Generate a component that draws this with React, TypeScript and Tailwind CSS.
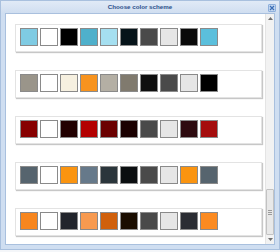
import React from 'react';

const schemes: string[][] = [
  ['#7fcbe3', '#ffffff', '#000000', '#4fb0cb', '#a5dff0', '#06141a', '#4a4a4a', '#e6e6e6', '#0a0a0a', '#5bbfdc'],
  ['#9a958a', '#ffffff', '#f6f0e0', '#f7931e', '#b4afa4', '#807a6e', '#0f0f0f', '#4a4a4a', '#e6e6e6', '#000000'],
  ['#870000', '#ffffff', '#220000', '#b30000', '#6b0000', '#1a0000', '#4a4a4a', '#e6e6e6', '#2e0b10', '#a50d0d'],
  ['#56646e', '#ffffff', '#fa9410', '#66798a', '#2b353b', '#0b0e10', '#4a4a4a', '#e6e6e6', '#fa9410', '#56646e'],
  ['#f7861e', '#ffffff', '#22252c', '#f79a50', '#d0600c', '#1a0d00', '#4a4a4a', '#e6e6e6', '#2b2d33', '#fb8a20'],
];

function SchemeCard({ colors }: { colors: string[] }) {
  return (
    <div className="h-[28px] shrink-0 border border-[#e3e3e3] bg-white pt-[3px] pl-[4px] shadow-[1px_1px_1px_rgba(0,0,0,0.22)] flex gap-[2px]">
      {colors.map((c, i) => (
        <div
          key={i}
          className="w-[18px] h-[18px] border border-[#8a8a8a]"
          style={{ backgroundColor: c }}
        />
      ))}
    </div>
  );
}

export default function App() {
  return (
    <div className="w-[280px] h-[252px] bg-[#f4f6f9]" style={{ fontFamily: '"Liberation Sans", Arial, sans-serif' }}>
      <div className="w-[280px] h-[250px] border border-[#a9c0de] bg-[#cfdef1] flex flex-col">
        <div className="h-[12px] relative bg-gradient-to-b from-[#e1eaf6] to-[#d0def0] flex items-center justify-center">
          <span className="text-[6.2px] font-bold text-[#2a4f8a] leading-none">Choose color scheme</span>
          <div className="absolute right-[3px] top-[3px] w-[8px] h-[8px] rounded-[1px] bg-[#c3d6ef] border border-[#8fb0dc] flex items-center justify-center">
            <svg width="6" height="6" viewBox="0 0 6 6">
              <path d="M1 1 L5 5 M5 1 L1 5" stroke="#3a6db5" strokeWidth="1.2" />
            </svg>
          </div>
        </div>
        <div className="flex-1 mx-[4px] mb-[4px] border border-[#a9c0de] bg-white flex overflow-hidden">
          <div className="flex-1 overflow-hidden pt-[10px] pl-[9px] pr-[3px] flex flex-col gap-[18px]">
            {schemes.map((s, i) => (
              <SchemeCard key={i} colors={s} />
            ))}
          </div>
          <div className="w-[9px] bg-[#f2f2f2] border-l border-[#e4e4e4] flex flex-col items-center">
            <svg width="5" height="3" viewBox="0 0 5 3" className="mt-[3px]">
              <path d="M0 3 L2.5 0 L5 3 Z" fill="#707070" />
            </svg>
            <div className="flex-1" />
            <div className="w-[8px] h-[46px] bg-[#e8e8e8] border border-[#c2c2c2] rounded-[1px] flex flex-col items-center justify-center gap-[1px]">
              <div className="w-[4px] h-px bg-[#9a9a9a]" />
              <div className="w-[4px] h-px bg-[#9a9a9a]" />
              <div className="w-[4px] h-px bg-[#9a9a9a]" />
            </div>
            <svg width="5" height="3" viewBox="0 0 5 3" className="mt-[3px] mb-[3px]">
              <path d="M0 0 L2.5 3 L5 0 Z" fill="#707070" />
            </svg>
          </div>
        </div>
      </div>
    </div>
  );
}
